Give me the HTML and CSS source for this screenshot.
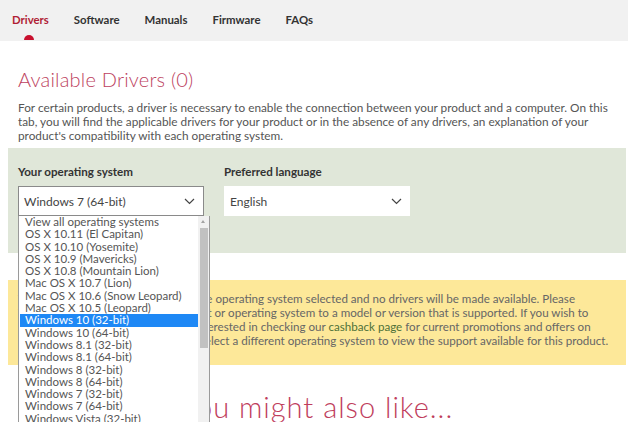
FILE: index.html
```html
<!DOCTYPE html>
<html>
<head>
	<meta charset="utf-8">
	<title>Support - Drivers</title>
	<link rel="stylesheet" href="styles.css">
</head>
<body>
	<nav class="tabs">
		<a class="tab active" href="#">Drivers</a>
		<a class="tab" href="#">Software</a>
		<a class="tab" href="#">Manuals</a>
		<a class="tab" href="#">Firmware</a>
		<a class="tab" href="#">FAQs</a>
	</nav>

	<main class="content">
		<h1 class="title">Available Drivers (0)</h1>
		<p class="intro">For certain products, a driver is necessary to enable the connection between your product and a computer. On this tab, you will find the applicable drivers for your product or in the absence of any drivers, an explanation of your product's compatibility with each operating system.</p>

		<section class="filters">
			<div class="field">
				<label class="fieldLabel">Your operating system</label>
				<div class="selectWrap">
					<div class="select open">
						<span>Windows 7 (64-bit)</span>
						<svg class="chevron" width="11" height="7" viewBox="0 0 11 7"><polyline points="1,1 5.5,5.5 10,1" fill="none" stroke="#444" stroke-width="1.2"/></svg>
					</div>
					<div class="optionList">
						<ul class="options">
							<li>View all operating systems</li>
							<li>OS X 10.11 (El Capitan)</li>
							<li>OS X 10.10 (Yosemite)</li>
							<li>OS X 10.9 (Mavericks)</li>
							<li>OS X 10.8 (Mountain Lion)</li>
							<li>Mac OS X 10.7 (Lion)</li>
							<li>Mac OS X 10.6 (Snow Leopard)</li>
							<li>Mac OS X 10.5 (Leopard)</li>
							<li class="selected">Windows 10 (32-bit)</li>
							<li>Windows 10 (64-bit)</li>
							<li>Windows 8.1 (32-bit)</li>
							<li>Windows 8.1 (64-bit)</li>
							<li>Windows 8 (32-bit)</li>
							<li>Windows 8 (64-bit)</li>
							<li>Windows 7 (32-bit)</li>
							<li>Windows 7 (64-bit)</li>
							<li>Windows Vista (32-bit)</li>
						</ul>
						<div class="scrollbar">
							<span class="arrowUp"></span>
							<span class="thumb"></span>
						</div>
					</div>
				</div>
			</div>
			<div class="field">
				<label class="fieldLabel">Preferred language</label>
				<div class="select">
					<span>English</span>
					<svg class="chevron" width="11" height="7" viewBox="0 0 11 7"><polyline points="1,1 5.5,5.5 10,1" fill="none" stroke="#444" stroke-width="1.2"/></svg>
				</div>
			</div>
		</section>

		<section class="notice">
			<p>This product is not supported with the operating system selected and no drivers will be made available. Please<br>
			You will need to upgrade your product or operating system to a model or version that is supported. If you wish to<br>
			upgrade your product, you may be interested in checking our <a href="#">cashback page</a> for current promotions and offers on<br>
			newer models. Alternatively, please select a different operating system to view the support available for this product.</p>
		</section>

		<h2 class="related">You might also like...</h2>
	</main>
</body>
</html>
```

FILE: styles.css
```css
html {
	font-family: "Lato", "Liberation Sans", sans-serif;
	background-color: white;
}

body {
	margin: 0;
}

.tabs {
	display: flex;
	gap: 25px;
	height: 41px;
	padding-left: 12px;
	align-items: center;
	background-color: #f1f1f1;
}

.tab {
	position: relative;
	font-size: 11.4px;
	font-weight: bold;
	color: #333;
	text-decoration: none;
	margin-top: -3px;
}

.tab.active {
	color: #b01e36;
}

.tab.active::after {
	content: "";
	position: absolute;
	left: 12px;
	top: 22px;
	width: 10px;
	height: 5px;
	border-radius: 5px 5px 0 0;
	background-color: #c8102e;
}

.content {
	padding: 0 2px 0 8px;
}

.title {
	margin: 27px 0 0 10px;
	font-size: 20px;
	font-weight: 300;
	letter-spacing: 0.2px;
	line-height: 22px;
	color: #bd3f60;
}

.intro {
	max-width: 596px;
	margin: 11px 0 0 10px;
	font-size: 11.8px;
	line-height: 14px;
	color: #555;
}

.filters {
	display: flex;
	gap: 20px;
	margin-top: 5px;
	padding: 17px 10px 37px;
	background-color: #e0e7d9;
}

.field {
	width: 186px;
}

.fieldLabel {
	display: block;
	font-size: 11.6px;
	font-weight: bold;
	color: #333;
	margin-bottom: 8px;
}

.selectWrap {
	position: relative;
}

.select {
	display: flex;
	justify-content: space-between;
	align-items: center;
	box-sizing: border-box;
	height: 30px;
	padding: 0 8px 0 6px;
	background-color: white;
	font-size: 12px;
	color: #444;
}

.select.open {
	border: 1px solid #8a8a8a;
	padding-left: 5px;
}

.optionList {
	position: absolute;
	left: 0;
	top: 100%;
	width: 192px;
	height: 215px;
	display: flex;
	box-sizing: border-box;
	border: 1px solid #9a9a9a;
	border-top: none;
	background-color: white;
	z-index: 2;
}

.options {
	flex: 1;
	list-style: none;
	margin: 0;
	padding: 0 0 0 1px;
}

.options li {
	height: 12.3px;
	line-height: 12.3px;
	padding-left: 5px;
	font-size: 11.5px;
	color: #555;
}

.options li.selected {
	background-color: #1e88f5;
	color: white;
}

.scrollbar {
	position: relative;
	width: 11px;
	background-color: #f1f1f1;
}

.arrowUp {
	position: absolute;
	left: 3px;
	top: 4px;
	border-left: 2.5px solid transparent;
	border-right: 2.5px solid transparent;
	border-bottom: 3px solid #a3a3a3;
}

.thumb {
	position: absolute;
	left: 2px;
	right: 1px;
	top: 12px;
	height: 120px;
	background-color: #c1c1c1;
}

.notice {
	margin-top: 27px;
	padding: 12px 10px 17px;
	background-color: #fde899;
}

.notice p {
	margin: 0;
	font-size: 11.6px;
	line-height: 14px;
	color: #666;
}

.notice a {
	color: #4f7138;
	text-decoration: none;
}

.related {
	margin: 25px 0 0;
	text-align: center;
	font-size: 29px;
	font-weight: 300;
	letter-spacing: 1px;
	line-height: 34px;
	color: #c03d5c;
}
```
